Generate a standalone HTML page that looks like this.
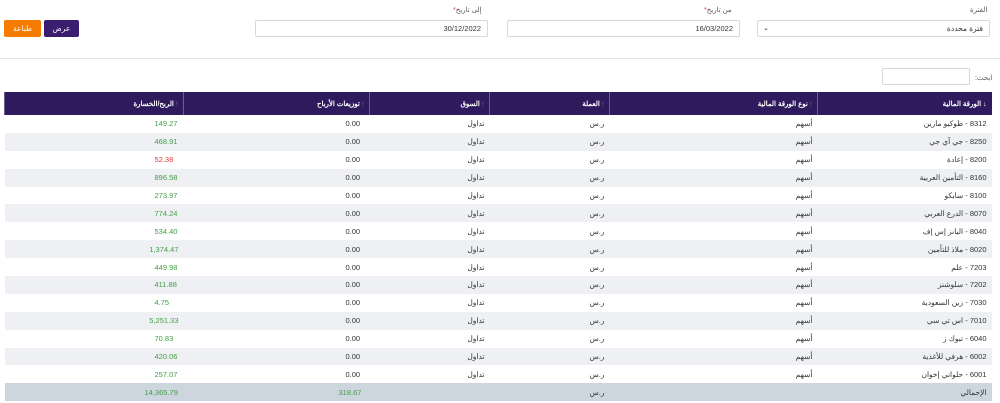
<!DOCTYPE html>
<html><head><meta charset="utf-8"><style>
body{margin:0;width:1000px;height:403px;background:#fff;font-family:"Liberation Sans","Noto Sans CJK SC",sans-serif;font-size:7.5px;color:#333;position:relative;overflow:hidden}
.a{position:absolute}
.inp{position:absolute;border:1px solid #d5d8dc;border-radius:2px;background:#fff;height:17px;box-sizing:border-box;font-size:7.5px;line-height:15px;text-align:right;padding-right:6px}
.lbl{position:absolute;font-size:7px;color:#555;direction:rtl}
.lbl i{color:#e53935;font-style:normal}
.btn{position:absolute;top:20px;height:17px;border-radius:2px;color:#fff;font-size:7.5px;line-height:17px;text-align:center}
table{position:absolute;left:4px;top:92px;width:987px;border-collapse:collapse;direction:rtl;table-layout:fixed}
th{background:#2e1a5c;color:#fff;height:23px;font-size:7px;text-align:right;padding:0 5px;border-left:1px solid #6c5f8e;font-weight:bold}
th span{color:#8c80ad;font-weight:normal}
td{height:17.9px;padding:0 5px;font-size:7.5px;text-align:right;box-sizing:border-box}
tr:nth-child(odd) td{background:#eef0f3}
td.g{color:#43a047;text-align:left;padding-left:150px}
td.r{color:#e53935;text-align:left;padding-left:150px}
td.z{text-align:left;padding-left:162px}
tr.t td{background:#cdd5de!important}
</style></head><body>
<div class="lbl" style="left:970px;top:6px">الفترة</div>
<div class="lbl" style="left:704px;top:6px">من تاريخ<i>*</i></div>
<div class="lbl" style="left:453px;top:6px">إلى تاريخ<i>*</i></div>
<div class="inp" style="left:757px;top:20px;width:233px;direction:rtl">فترة محددة<span style="position:absolute;left:5px;font-size:7px">&#8964;</span></div>
<div class="inp" style="left:507px;top:20px;width:233px">16/03/2022</div>
<div class="inp" style="left:255px;top:20px;width:233px">30/12/2022</div>
<div class="btn" style="left:44px;width:35px;background:#3a1d6e">عرض</div>
<div class="btn" style="left:4px;width:37px;background:#f57c00">طباعة</div>
<div class="a" style="left:0;top:58px;width:1000px;height:1px;background:#e3e5e8"></div>
<div class="lbl" style="left:975px;top:74px">ابحث:</div>
<div class="inp" style="left:882px;top:68px;width:88px"></div>
<table>
<colgroup><col style="width:174px"><col style="width:208px"><col style="width:120px"><col style="width:120px"><col style="width:186px"><col style="width:179px"></colgroup>
<tr><th>↓ الورقة المالية</th><th><span>⁝</span> نوع الورقة المالية</th><th><span>⁝</span> العملة</th><th><span>⁝</span> السوق</th><th><span>⁝</span> توزيعات الأرباح</th><th><span>⁝</span> الربح/الخسارة</th></tr>
<tr><td>8312 - طوكيو مارين</td><td>أسهم</td><td>ر.س</td><td>تداول</td><td class="z">0.00</td><td class="g">149.27</td></tr>
<tr><td>8250 - جي آي جي</td><td>أسهم</td><td>ر.س</td><td>تداول</td><td class="z">0.00</td><td class="g">468.91</td></tr>
<tr><td>8200 - إعادة</td><td>أسهم</td><td>ر.س</td><td>تداول</td><td class="z">0.00</td><td class="r">52.38</td></tr>
<tr><td>8160 - التأمين العربية</td><td>أسهم</td><td>ر.س</td><td>تداول</td><td class="z">0.00</td><td class="g">896.58</td></tr>
<tr><td>8100 - سايكو</td><td>أسهم</td><td>ر.س</td><td>تداول</td><td class="z">0.00</td><td class="g">273.97</td></tr>
<tr><td>8070 - الدرع العربي</td><td>أسهم</td><td>ر.س</td><td>تداول</td><td class="z">0.00</td><td class="g">774.24</td></tr>
<tr><td>8040 - اليانز إس إف</td><td>أسهم</td><td>ر.س</td><td>تداول</td><td class="z">0.00</td><td class="g">534.40</td></tr>
<tr><td>8020 - ملاذ للتأمين</td><td>أسهم</td><td>ر.س</td><td>تداول</td><td class="z">0.00</td><td class="g">1,374.47</td></tr>
<tr><td>7203 - علم</td><td>أسهم</td><td>ر.س</td><td>تداول</td><td class="z">0.00</td><td class="g">449.98</td></tr>
<tr><td>7202 - سلوشنز</td><td>أسهم</td><td>ر.س</td><td>تداول</td><td class="z">0.00</td><td class="g">411.88</td></tr>
<tr><td>7030 - زين السعودية</td><td>أسهم</td><td>ر.س</td><td>تداول</td><td class="z">0.00</td><td class="g">4.75</td></tr>
<tr><td>7010 - اس تي سي</td><td>أسهم</td><td>ر.س</td><td>تداول</td><td class="z">0.00</td><td class="g">5,251.33</td></tr>
<tr><td>6040 - تبوك ز</td><td>أسهم</td><td>ر.س</td><td>تداول</td><td class="z">0.00</td><td class="g">70.83</td></tr>
<tr><td>6002 - هرفي للأغذية</td><td>أسهم</td><td>ر.س</td><td>تداول</td><td class="z">0.00</td><td class="g">420.06</td></tr>
<tr><td>6001 - حلواني إخوان</td><td>أسهم</td><td>ر.س</td><td>تداول</td><td class="z">0.00</td><td class="g">257.07</td></tr>
<tr class="t"><td>الإجمالي</td><td></td><td>ر.س</td><td></td><td class="g" style="padding-left:155px">318.67</td><td class="g" style="padding-left:140px">14,365.79</td></tr>
</table>
</body></html>
